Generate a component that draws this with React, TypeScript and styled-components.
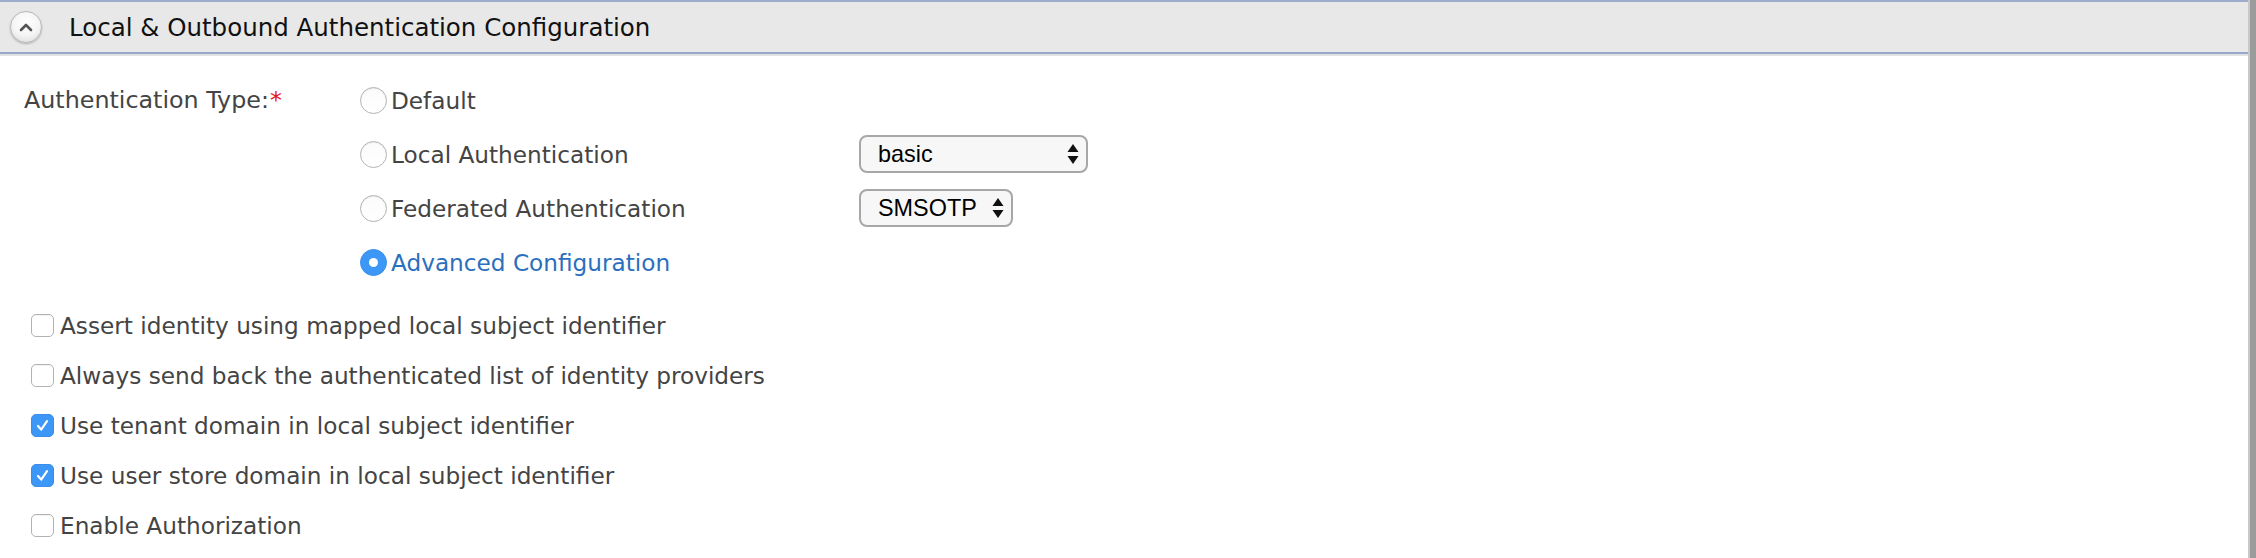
import React from "react";
import styled, { createGlobalStyle } from "styled-components";

const Global = createGlobalStyle`
  html, body { margin: 0; padding: 0; background: #ffffff; }
  body { font-family: "DejaVu Sans", "Liberation Sans", sans-serif; }
`;

const Page = styled.div`
  display: flex;
  width: 2256px;
  height: 558px;
  overflow: hidden;
`;

const Panel = styled.div`
  flex: 1;
  display: flex;
  flex-direction: column;
  background: #fff;
`;

const Edge = styled.div`
  width: 8px;
  border-left: 2px solid #c8c8c8;
  background: #9b9b9b;
  box-sizing: border-box;
`;

const Header = styled.div`
  display: flex;
  align-items: center;
  gap: 27px;
  height: 50px;
  padding-left: 10px;
  background: #e8e8e8;
  border-top: 2px solid #9eaccb;
  border-bottom: 2px solid #97a8ca;
  box-shadow: 0 2px 0 #e2e2e2;
`;

const Toggle = styled.div`
  width: 32px;
  height: 32px;
  border-radius: 50%;
  box-sizing: border-box;
  border: 1px solid #b9b9b9;
  background: radial-gradient(circle at 50% 35%, #ffffff 0%, #f4f4f4 55%, #d6d6d6 100%);
  box-shadow: 0 1px 2px rgba(0, 0, 0, 0.25);
  display: flex;
  align-items: center;
  justify-content: center;
`;

const Title = styled.div`
  font-size: 24.5px;
  color: #111;
`;

const Content = styled.div`
  padding: 19px 0 0 24px;
  display: flex;
  flex-direction: column;
`;

const AuthSection = styled.div`
  display: grid;
  grid-template-columns: 336px auto;
`;

const FieldLabel = styled.div`
  height: 54px;
  display: flex;
  align-items: center;
  font-size: 23.8px;
  color: #444;
`;

const Required = styled.span`
  color: #e4161d;
  margin-left: 1px;
`;

const RadioList = styled.div`
  display: flex;
  flex-direction: column;
`;

const RadioRow = styled.div`
  display: grid;
  grid-template-columns: 499px auto;
  align-items: center;
  height: 54px;
`;

const RadioLabel = styled.label<{ $active?: boolean }>`
  display: flex;
  align-items: center;
  gap: 4px;
  font-size: 23.2px;
  color: ${(p) => (p.$active ? "#2b6fbd" : "#444")};
`;

const RadioDot = styled.span<{ $checked?: boolean }>`
  width: 27px;
  height: 27px;
  border-radius: 50%;
  box-sizing: border-box;
  display: inline-flex;
  align-items: center;
  justify-content: center;
  ${(p) =>
    p.$checked
      ? `background: #3d97f7; border: 1px solid #3a8ee8;`
      : `background: linear-gradient(#fbfbfb, #ffffff); border: 1px solid #b3b3b3; box-shadow: inset 0 1px 1px rgba(0,0,0,0.08);`}
  &::after {
    content: "";
    display: ${(p) => (p.$checked ? "block" : "none")};
    width: 9px;
    height: 9px;
    border-radius: 50%;
    background: #fff;
  }
`;

const Select = styled.div<{ $width: number }>`
  width: ${(p) => p.$width}px;
  height: 38px;
  box-sizing: border-box;
  border: 2px solid #a7a7a7;
  border-radius: 8px;
  background: #f7f7f7;
  display: flex;
  align-items: center;
  justify-content: space-between;
  padding: 0 7px 0 17px;
  font-family: "Liberation Sans", Arial, sans-serif;
  font-size: 23.4px;
  color: #000;
`;

const Checks = styled.div`
  display: flex;
  flex-direction: column;
  margin-top: 11px;
`;

const CheckRow = styled.label`
  display: flex;
  align-items: center;
  gap: 6px;
  height: 50px;
  font-size: 23.2px;
  color: #444;
`;

const Box = styled.span<{ $checked?: boolean }>`
  width: 23px;
  height: 23px;
  margin-left: 7px;
  border-radius: 5px;
  box-sizing: border-box;
  display: inline-flex;
  align-items: center;
  justify-content: center;
  ${(p) =>
    p.$checked
      ? `background: #3d97f7; border: 1px solid #3a8ee8;`
      : `background: #fff; border: 1px solid #b3b3b3; box-shadow: inset 0 1px 1px rgba(0,0,0,0.06);`}
`;

const Arrows = () => (
  <svg width="12" height="22" viewBox="0 0 12 22">
    <path d="M6 1 L11.5 9 L0.5 9 Z" fill="#111" />
    <path d="M6 21 L11.5 13 L0.5 13 Z" fill="#111" />
  </svg>
);

const Chevron = () => (
  <svg width="14" height="10" viewBox="0 0 14 10">
    <path d="M2 8 L7 3 L12 8" fill="none" stroke="#555" strokeWidth="2.6" strokeLinecap="round" strokeLinejoin="round" />
  </svg>
);

const Tick = () => (
  <svg width="15" height="15" viewBox="0 0 15 15">
    <path d="M3 8 L6.2 11.6 L12 3.2" fill="none" stroke="#fff" strokeWidth="2.2" strokeLinecap="round" strokeLinejoin="round" />
  </svg>
);

const radios = [
  { label: "Default" },
  { label: "Local Authentication", select: { value: "basic", width: 229 } },
  { label: "Federated Authentication", select: { value: "SMSOTP", width: 154 } },
  { label: "Advanced Configuration", checked: true },
];

const checks = [
  { label: "Assert identity using mapped local subject identifier", checked: false },
  { label: "Always send back the authenticated list of identity providers", checked: false },
  { label: "Use tenant domain in local subject identifier", checked: true },
  { label: "Use user store domain in local subject identifier", checked: true },
  { label: "Enable Authorization", checked: false },
];

export default function App() {
  return (
    <Page>
      <Global />
      <Panel>
        <Header>
          <Toggle>
            <Chevron />
          </Toggle>
          <Title>Local &amp; Outbound Authentication Configuration</Title>
        </Header>
        <Content>
          <AuthSection>
            <div>
              <FieldLabel>
                Authentication Type:<Required>*</Required>
              </FieldLabel>
            </div>
            <RadioList>
              {radios.map((r) => (
                <RadioRow key={r.label}>
                  <RadioLabel $active={r.checked}>
                    <RadioDot $checked={r.checked} />
                    {r.label}
                  </RadioLabel>
                  {r.select ? (
                    <Select $width={r.select.width}>
                      <span>{r.select.value}</span>
                      <Arrows />
                    </Select>
                  ) : (
                    <span />
                  )}
                </RadioRow>
              ))}
            </RadioList>
          </AuthSection>
          <Checks>
            {checks.map((c) => (
              <CheckRow key={c.label}>
                <Box $checked={c.checked}>{c.checked && <Tick />}</Box>
                {c.label}
              </CheckRow>
            ))}
          </Checks>
        </Content>
      </Panel>
      <Edge />
    </Page>
  );
}
